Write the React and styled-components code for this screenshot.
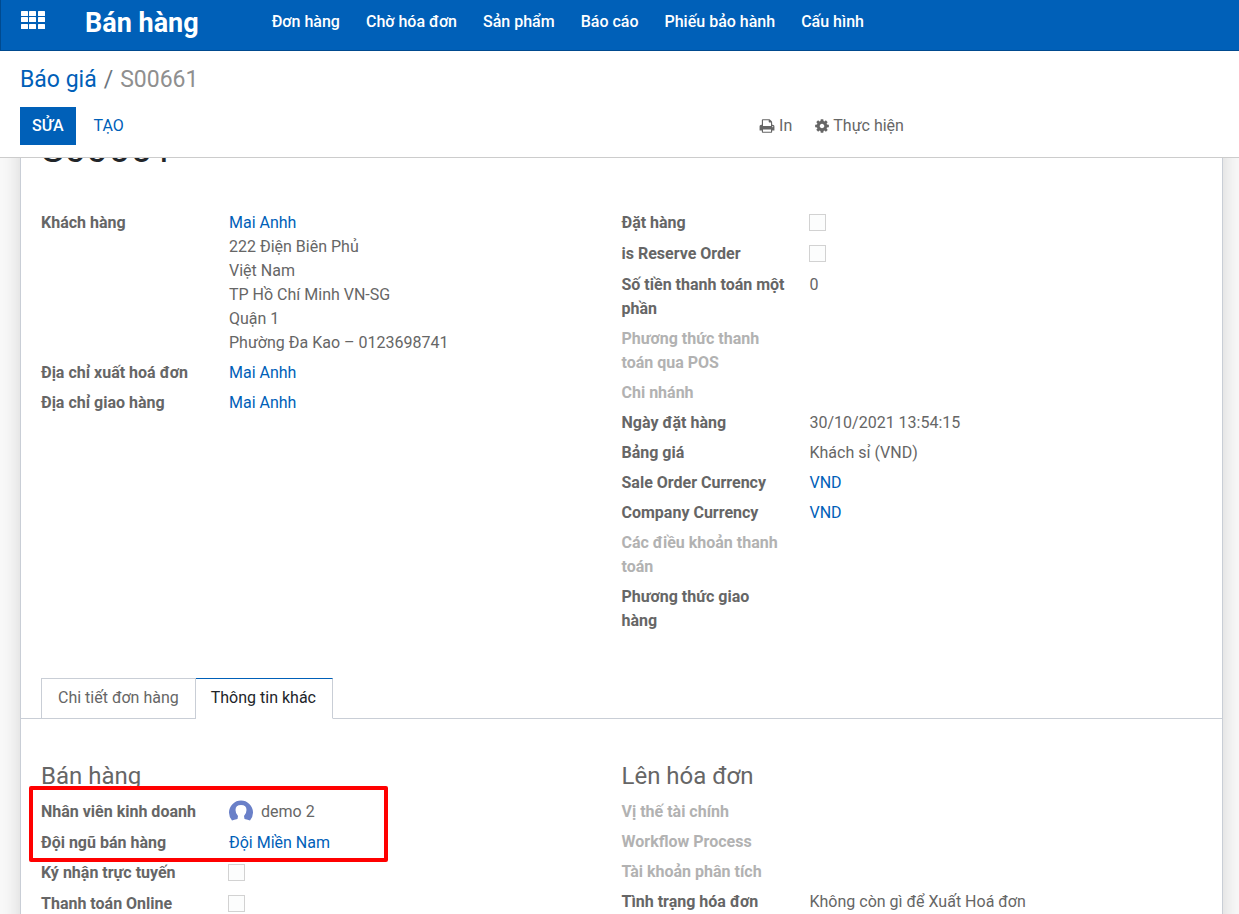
import React, { useState } from "react"
import styled, { createGlobalStyle } from "styled-components"

const GlobalStyle = createGlobalStyle`
  * {
    box-sizing: border-box;
  }

  body {
    margin: 0;
    background: #f9f9f9;
    color: #666;
    font-family: Roboto, "Noto Sans", sans-serif;
    font-size: 16px;
    line-height: 24px;
  }

  button {
    font: inherit;
    cursor: pointer;
  }
`

const Page = styled.div`
  display: flex;
  flex-direction: column;
  height: 100vh;
  overflow: hidden;
`

//Navbar
const Navbar = styled.header`
  display: flex;
  flex: none;
  align-items: flex-start;
  height: 51px;
  padding-left: 20px;
  background: #0060b8;
  border-left: 1px solid #004a8f;
  border-bottom: 1px solid #004a8f;
`

const AppsButton = styled.button`
  display: flex;
  margin-right: 40px;
  padding: 11px 0;
  border: 0;
  background: none;
  color: #fff;
`

const Brand = styled.a`
  margin-right: 73px;
  color: #fff;
  font-size: 27px;
  font-weight: 700;
  line-height: 46px;
  text-decoration: none;
`

const Menu = styled.nav`
  display: flex;
  gap: 26px;
`

const MenuLink = styled.a`
  color: #fff;
  font-weight: 500;
  line-height: 44px;
  text-decoration: none;
`

//Control panel
const ControlPanel = styled.div`
  display: flex;
  flex: none;
  flex-direction: column;
  gap: 11px;
  padding: 13px 16px 12px 20px;
  background: #fff;
  border-bottom: 1px solid #ccc;
`

const Breadcrumb = styled.nav`
  display: flex;
  gap: 7px;
  font-size: 23px;
  line-height: 32px;
  color: #6c757d;
`

const Current = styled.span`
  color: #8f8f8f;
`

const Link = styled.a`
  color: #0060b8;
  text-decoration: none;
`

const Toolbar = styled.div`
  display: grid;
  grid-template-columns: 1fr auto 1fr;
  align-items: center;
`

const ButtonGroup = styled.div`
  display: flex;
  gap: 6px;
`

const Button = styled.button`
  height: 38px;
  padding: 0 12px;
  border: 0;
  background: ${props => (props.$primary ? "#0060b8" : "none")};
  color: ${props => (props.$primary ? "#fff" : "#0060b8")};
  font-weight: ${props => (props.$primary ? 500 : 400)};
  text-transform: uppercase;
`

const Actions = styled.div`
  display: flex;
  grid-column: 2;
  gap: 23px;
  margin-left: 420px;
`

const ActionButton = styled.button`
  display: flex;
  align-items: center;
  gap: 4px;
  padding: 0;
  border: 0;
  background: none;
  color: #666;
`

//Form sheet
const Content = styled.main`
  flex: 1;
  min-height: 0;
  overflow: hidden;
  padding: 0 16px 0 20px;
`

const Sheet = styled.section`
  /* scrolled so that the order title is mostly under the control panel */
  margin-top: -32px;
  padding-bottom: 20px;
  background: #fff;
  border: 1px solid #c9ced6;
  box-shadow: 0 0 20px rgba(0, 0, 0, 0.15);
`

const Title = styled.h1`
  margin: 0 20px 37px;
  color: #212529;
  font-size: 39px;
  font-weight: 400;
  line-height: 44px;
`

const Columns = styled.div`
  display: grid;
  grid-template-columns: 1fr 1fr;
  padding: 0 20px;
`

const Group = styled.div`
  position: relative;
`

const GroupTitle = styled.h2`
  margin: 0 0 5px;
  font-size: 24px;
  font-weight: 400;
  line-height: 32px;
`

const Row = styled.div`
  display: grid;
  grid-template-columns: 188px 1fr;
  min-height: ${props => (props.$tall ? 31 : 30)}px;
  padding: 3px 0;
`

const Label = styled.label`
  padding-right: 22px;
  color: ${props => (props.$muted ? "#b2b2b2" : "#666")};
  font-weight: 700;
`

const Checkbox = styled.input`
  appearance: none;
  width: 17px;
  height: 17px;
  margin: 3px 0 0 -1px;
  background: #fcfdfd;
  border: 1px solid #d2d2d2;

  &:checked {
    background: #0060b8;
  }
`

const Person = styled.div`
  display: flex;
  align-items: center;
  gap: 8px;
`

//Tabs
const TabList = styled.div`
  display: flex;
  margin: 42px 0 41px;
  padding: 0 20px;
  border-bottom: 1px solid #c9ced6;
`

const Tab = styled.button`
  height: 41px;
  margin: 0 0 -1px;
  padding: 0 16px 2px;
  background: #fff;
  border: 1px solid #c9ced6;
  color: #666;

  & + & {
    padding-left: 15px;
    border-left-width: 0;
  }

  &[aria-selected="true"] {
    color: #212529;
    border-top-color: #0060b8;
    border-bottom-color: #fff;
  }
`

//Frame drawn over the salesperson rows
const Highlight = styled.div`
  position: absolute;
  top: 26px;
  left: -12px;
  width: 359px;
  height: 76px;
  border: 4px solid #f00;
  border-radius: 2px;
  pointer-events: none;
`

const AppsIcon = () => (
  <svg width="24" height="18" viewBox="0 0 24 18" fill="currentColor">
    {[0, 8, 17].map(x =>
      [0, 6, 13].map(y => (
        <rect key={`${x}-${y}`} x={x} y={y} width="7" height="5" rx="0.5" />
      ))
    )}
  </svg>
)

const PrintIcon = () => (
  <svg width="16" height="16" viewBox="0 0 1792 1792" fill="currentColor">
    <path d="M448 1536h896v-256h-896v256zm0-640h896v-384h-160q-40 0-68-28t-28-68v-160h-640v640zm1152 64q0-26-19-45t-45-19-45 19-19 45 19 45 45 19 45-19 19-45zm128 0v416q0 13-9.500 22.500t-22.500 9.500h-224v160q0 40-28 68t-68 28h-960q-40 0-68-28t-28-68v-160h-224q-13 0-22.500-9.500t-9.500-22.500v-416q0-79 56.500-135.500t135.500-56.500h64v-544q0-40 28-68t68-28h672q40 0 88 20t76 48l152 152q28 28 48 76t20 88v256h64q79 0 135.500 56.500t56.500 135.500z" />
  </svg>
)

const CogIcon = () => (
  <svg width="14" height="16" viewBox="128 0 1536 1792" fill="currentColor">
    <path d="M1152 896q0-106-75-181t-181-75-181 75-75 181 75 181 181 75 181-75 75-181zm512-109v222q0 12-8 23t-20 13l-185 28q-19 54-39 91 35 50 107 138 10 12 10 25t-9 23q-27 37-99 108t-94 71q-12 0-26-9l-138-108q-44 23-91 38-16 136-29 186-7 28-36 28h-222q-14 0-24.500-8.500t-11.500-21.500l-28-184q-49-16-90-37l-141 107q-10 9-25 9-14 0-25-11-126-114-165-168-7-10-7-23 0-12 8-23 15-21 51-66.500t54-70.500q-27-50-41-99l-183-27q-13-2-21-12.500t-8-23.500v-222q0-12 8-23t19-13l186-28q14-46 39-92-40-57-107-138-10-12-10-24 0-10 9-23 26-36 98.500-107.500t94.500-71.500q13 0 26 10l138 107q44-23 91-38 16-136 29-186 7-28 36-28h222q14 0 24.500 8.500t11.500 21.500l28 184q49 16 90 37l142-107q9-9 24-9 13 0 25 10 129 119 165 170 7 8 7 22 0 12-8 23-15 21-51 66.500t-54 70.500q26 50 41 98l183 28q13 2 21 12.500t8 23.500z" />
  </svg>
)

const Avatar = () => (
  <svg width="24" height="24" viewBox="0 0 24 24">
    <path
      fill="#6a80c8"
      d="M3 20.500A12 12 0 1 1 21 20.500Q19 19.500 15.500 19L15 16Q17.500 13.500 17.500 10Q17.500 5 12 5Q6.500 5 6.500 10Q6.500 13.500 9 16L8.500 19Q5 19.500 3 20.500Z"
    />
  </svg>
)

const CheckField = ({ id, label }) => (
  <Row $tall>
    <Label htmlFor={id}>{label}</Label>
    <Checkbox id={id} type="checkbox" />
  </Row>
)

const Field = ({ label, muted, tall, children }) => (
  <Row $tall={tall}>
    <Label as="span" $muted={muted}>
      {label}
    </Label>
    <div>{children}</div>
  </Row>
)

const menu = [
  "Đơn hàng",
  "Chờ hóa đơn",
  "Sản phẩm",
  "Báo cáo",
  "Phiếu bảo hành",
  "Cấu hình",
]

const tabs = ["Chi tiết đơn hàng", "Thông tin khác"]

const App = () => {
  const [tab, setTab] = useState(1)

  return (
    <Page>
      <GlobalStyle />
      <Navbar>
        <AppsButton aria-label="Apps">
          <AppsIcon />
        </AppsButton>
        <Brand href="#">Bán hàng</Brand>
        <Menu>
          {menu.map(item => (
            <MenuLink key={item} href="#">
              {item}
            </MenuLink>
          ))}
        </Menu>
      </Navbar>

      <ControlPanel>
        <Breadcrumb>
          <Link href="#">Báo giá</Link>
          <span>/</span>
          <Current>S00661</Current>
        </Breadcrumb>
        <Toolbar>
          <ButtonGroup>
            <Button $primary>Sửa</Button>
            <Button>Tạo</Button>
          </ButtonGroup>
          <Actions>
            <ActionButton>
              <PrintIcon />
              In
            </ActionButton>
            <ActionButton>
              <CogIcon />
              Thực hiện
            </ActionButton>
          </Actions>
        </Toolbar>
      </ControlPanel>

      <Content>
        <Sheet>
          <Title>S00661</Title>
          <Columns>
            <Group>
              <Field label="Khách hàng">
                <Link href="#">Mai Anhh</Link>
                <div>222 Điện Biên Phủ</div>
                <div>Việt Nam</div>
                <div>TP Hồ Chí Minh VN-SG</div>
                <div>Quận 1</div>
                <div>Phường Đa Kao – 0123698741</div>
              </Field>
              <Field label="Địa chỉ xuất hoá đơn">
                <Link href="#">Mai Anhh</Link>
              </Field>
              <Field label="Địa chỉ giao hàng">
                <Link href="#">Mai Anhh</Link>
              </Field>
            </Group>
            <Group>
              <CheckField id="preorder" label="Đặt hàng" />
              <CheckField id="reserve" label="is Reserve Order" />
              <Field label="Số tiền thanh toán một phần">0</Field>
              <Field label="Phương thức thanh toán qua POS" muted />
              <Field label="Chi nhánh" muted />
              <Field label="Ngày đặt hàng">30/10/2021 13:54:15</Field>
              <Field label="Bảng giá">Khách sỉ (VND)</Field>
              <Field label="Sale Order Currency">
                <Link href="#">VND</Link>
              </Field>
              <Field label="Company Currency">
                <Link href="#">VND</Link>
              </Field>
              <Field label="Các điều khoản thanh toán" muted />
              <Field label="Phương thức giao hàng" />
            </Group>
          </Columns>

          <TabList role="tablist">
            {tabs.map((name, i) => (
              <Tab
                key={name}
                role="tab"
                aria-selected={tab === i}
                onClick={() => setTab(i)}
              >
                {name}
              </Tab>
            ))}
          </TabList>

          <Columns>
            <Group>
              <GroupTitle>Bán hàng</GroupTitle>
              <Field label="Nhân viên kinh doanh" tall>
                <Person>
                  <Avatar />
                  demo 2
                </Person>
              </Field>
              <Field label="Đội ngũ bán hàng">
                <Link href="#">Đội Miền Nam</Link>
              </Field>
              <CheckField id="sign" label="Ký nhận trực tuyến" />
              <CheckField id="pay" label="Thanh toán Online" />
              <Highlight />
            </Group>
            <Group>
              <GroupTitle>Lên hóa đơn</GroupTitle>
              <Field label="Vị thế tài chính" muted />
              <Field label="Workflow Process" muted />
              <Field label="Tài khoản phân tích" muted />
              <Field label="Tình trạng hóa đơn">
                Không còn gì để Xuất Hoá đơn
              </Field>
            </Group>
          </Columns>
        </Sheet>
      </Content>
    </Page>
  )
}

export default App
